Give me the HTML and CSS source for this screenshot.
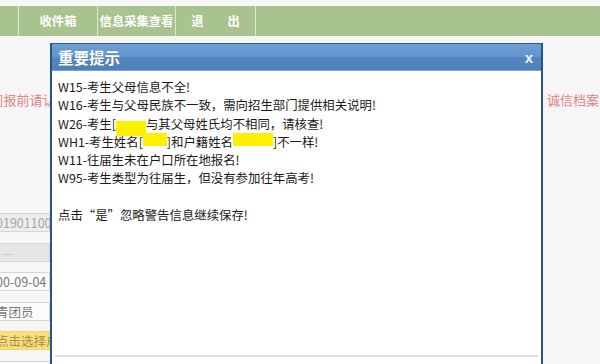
FILE: index.html
```html
<!DOCTYPE html>
<html lang="zh-CN">
  <head>
    <meta charset="UTF-8" />
    <meta name="viewport" content="width=device-width, initial-scale=1.0" />
    <title>重要提示</title>
    <link rel="stylesheet" href="styles.css">
  </head>

  <body>
    <ul class="nav">
      <li class="nav-cut"></li>
      <li class="nav-inbox">收件箱</li>
      <li class="nav-view">信息采集查看</li>
      <li class="nav-exit"><span>退</span><span>出</span></li>
      <li class="nav-rest"></li>
    </ul>

    <div class="stage">
      <div class="side side-left">
        <p class="notice notice-left">]报前请认</p>
        <div class="field field-gray">01901100</div>
        <div class="field field-dim">—</div>
        <div class="field field-date">00-09-04</div>
        <div class="field field-text">青团员</div>
        <div class="field field-pick">点击选择户</div>
        <div class="field"></div>
      </div>

      <div class="dialog">
        <div class="dialog-head">
          <span class="dialog-title">重要提示</span>
          <span class="dialog-close">x</span>
        </div>
        <div class="dialog-body">
          <p>W15-考生父母信息不全!</p>
          <p>W16-考生与父母民族不一致，需向招生部门提供相关说明!</p>
          <p>W26-考生[<span class="mask mask-a"></span>与其父母姓氏均不相同，请核查!</p>
          <p>WH1-考生姓名[<span class="mask mask-b"></span>]和户籍姓名<span class="mask mask-c"></span>]不一样!</p>
          <p>W11-往届生未在户口所在地报名!</p>
          <p>W95-考生类型为往届生，但没有参加往年高考!</p>
          <p class="blank"></p>
          <p>点击“是”忽略警告信息继续保存!</p>
        </div>
        <div class="dialog-foot"></div>
      </div>

      <div class="side side-right">
        <p class="notice notice-right">、诚信档案</p>
      </div>
    </div>
  </body>
</html>
```

FILE: styles.css
```css
* {
  padding: 0;
  margin: 0;
  box-sizing: border-box;
}

html,
body {
  width: 100%;
  height: 100%;
  overflow: hidden;
}

body {
  background-color: #f7f5f5;
  font-family: "Microsoft YaHei", "Noto Sans CJK SC", sans-serif;
}

/* 顶部导航 */
.nav {
  display: flex;
  height: 30px;
  margin-top: 6px;
  list-style: none;
  background-color: #a9c38f;
}

.nav li {
  display: flex;
  justify-content: center;
  align-items: center;
  color: #fff;
  font-size: 12.3px;
  font-weight: bold;
}

.nav li + li {
  border-left: 1px solid #dde7d3;
}

.nav-cut {
  width: 18px;
}

.nav-inbox {
  width: 79px;
}

.nav-view {
  width: 78px;
}

.nav-exit {
  width: 80px;
  gap: 24px;
}

.nav-rest {
  flex: 1;
}

/* 主体 */
.stage {
  display: flex;
  align-items: flex-start;
}

.side {
  overflow: hidden;
}

.side-left {
  width: 50px;
}

.side-right {
  flex: 1;
}

.notice {
  height: 18px;
  margin-top: 55px;
  font-size: 13px;
  line-height: 18px;
  color: #dc8683;
  white-space: nowrap;
}

.notice-left {
  margin-left: -1px;
}

.notice-right {
  margin-left: -9px;
}

.field {
  height: 19px;
  margin-bottom: 10.5px;
  border: 1px solid #d6d6d6;
  border-left: none;
  background-color: #fbfbfb;
  font-size: 12.5px;
  line-height: 17px;
  color: #777;
  white-space: nowrap;
}

.field-gray {
  margin-top: 104px;
  background-color: #ededed;
  color: #a8a8a8;
  text-indent: -4px;
}

.field-dim {
  background-color: #e6e6e6;
  color: #c4c4c4;
  text-indent: 2px;
}

.field-date {
  margin-top: 1px;
  text-indent: -4px;
}

.field-text {
  margin-top: 1px;
  text-indent: -4px;
}

.field-pick {
  margin-top: 1px;
  background-color: #f6e07c;
  border-color: #eed76e;
  color: #a88b52;
  text-indent: -4px;
}

/* 弹窗 */
.dialog {
  width: 493px;
  height: 360px;
  margin-top: 7px;
  background-color: #fff;
  border: 2px solid #22558b;
  border-top: 1px solid #2d5e92;
  flex-shrink: 0;
}

.dialog-head {
  display: flex;
  justify-content: space-between;
  align-items: center;
  height: 27px;
  padding: 0 8px 0 6px;
  background: linear-gradient(#6c9fd6 0%, #6396cf 48%, #5586be 52%, #5080b8 100%);
  border-bottom: 1px solid #7aa2d6;
}

.dialog-title {
  font-size: 15.5px;
  font-weight: bold;
  color: #fff;
  text-shadow: 0 0 1px rgba(0, 0, 0, 0.2);
}

.dialog-close {
  font-family: "Liberation Sans", Arial, sans-serif;
  font-size: 15px;
  font-weight: bold;
  color: #eef3f9;
  line-height: 15px;
}

.dialog-body {
  height: 284px;
  padding: 7px 6px 0;
  font-size: 12.4px;
  line-height: 18.3px;
  color: #1a1a1a;
}

.dialog-body p {
  height: 18.3px;
  white-space: nowrap;
}

.mask {
  display: inline-block;
  position: relative;
  height: 10px;
}

.mask::before {
  content: "";
  position: absolute;
  left: 0;
  right: 0;
  top: 1px;
  height: 15px;
  background-color: #fff000;
}

.mask-a {
  width: 30px;
}

.mask-a::before {
  top: 2px;
}

.mask-b {
  width: 24px;
}

.mask-b::before {
  top: -4px;
  height: 13px;
}

.mask-c {
  width: 40px;
}

.mask-c::before {
  top: -4px;
  height: 13px;
}

.dialog-foot {
  margin: 0 3px;
  height: 40px;
  border-top: 2px solid #dedede;
}
```
